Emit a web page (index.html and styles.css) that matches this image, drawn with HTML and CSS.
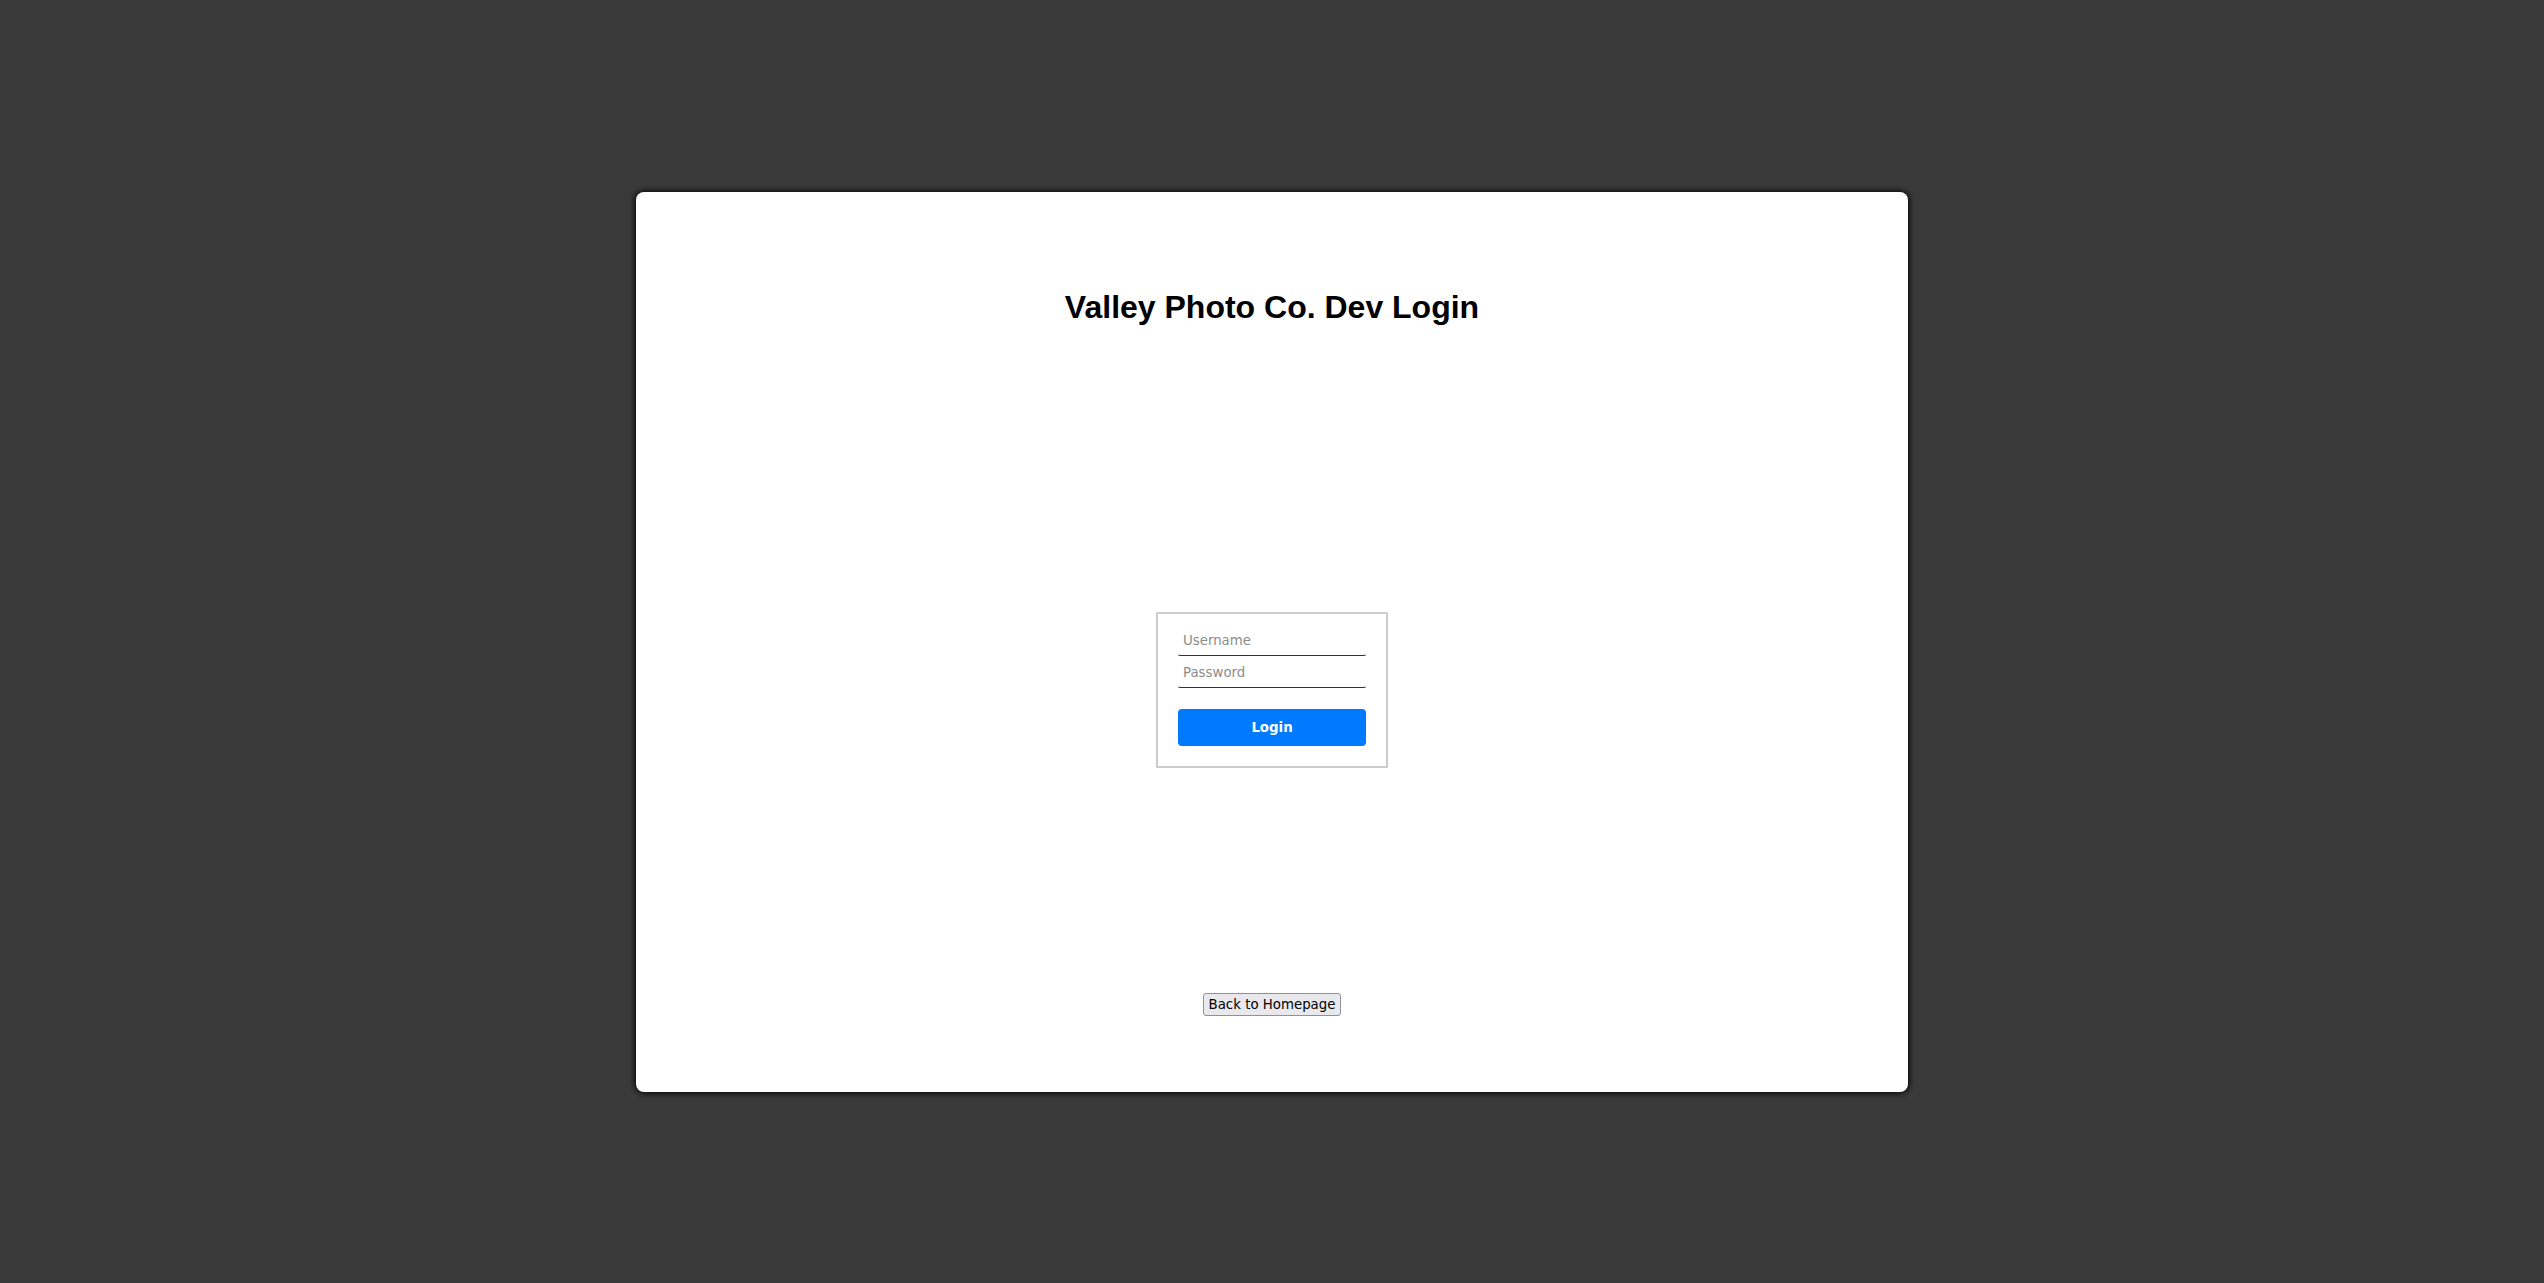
FILE: index.html
```html
<!DOCTYPE html>
<html>
<head>
<meta charset="utf-8">
<link rel="stylesheet" href="styles.css">
</head>
<body>
<div class="card">
  <h1 class="title">Valley Photo Co. Dev Login</h1>
  <form class="login-box">
    <input class="field" type="text" placeholder="Username">
    <input class="field" type="password" placeholder="Password">
    <button class="login-btn" type="button">Login</button>
  </form>
  <button class="back-btn" type="button">Back to Homepage</button>
</div>
</body>
</html>
```

FILE: styles.css
```css
html, body {
  margin: 0;
  height: 100%;
}
body {
  background: #3a3a3a;
  display: flex;
  align-items: center;
  justify-content: center;
  font-family: "DejaVu Sans", sans-serif;
}
.card {
  width: 1272px;
  height: 900px;
  box-sizing: border-box;
  background: #fff;
  border-radius: 8px;
  box-shadow: 0 0 6px 1px #000;
  display: flex;
  flex-direction: column;
  align-items: center;
  padding-top: 97px;
}
.title {
  margin: 0;
  font-family: "Liberation Sans", Arial, sans-serif;
  font-size: 32px;
  font-weight: bold;
  color: #000;
}
.login-box {
  margin-top: 286px;
  border: 2px solid #ccc;
  padding: 18px 20px 20px;
  width: 188px;
  display: flex;
  flex-direction: column;
}
.field {
  display: block;
  width: 100%;
  box-sizing: border-box;
  border: none;
  border-bottom: 1px solid #333;
  border-radius: 2px;
  padding: 1px 5px 7px;
  margin: 0 0 8px;
  font-family: "DejaVu Sans", sans-serif;
  font-size: 13.33px;
  outline: none;
}
.field::placeholder {
  color: #8c8c8c;
}
.login-btn {
  margin-top: 13px;
  height: 37px;
  width: 100%;
  border: none;
  border-radius: 4px;
  background: #007bff;
  color: #fff;
  font-family: "DejaVu Sans", sans-serif;
  font-size: 13.33px;
  font-weight: bold;
}
.back-btn {
  margin-top: 225px;
  font-family: "DejaVu Sans", sans-serif;
  font-size: 13.33px;
  background: #e9e9ed;
  border: 1px solid #8f8f9d;
  border-radius: 3px;
  padding: 3px 5px;
  color: #000;
}
```
